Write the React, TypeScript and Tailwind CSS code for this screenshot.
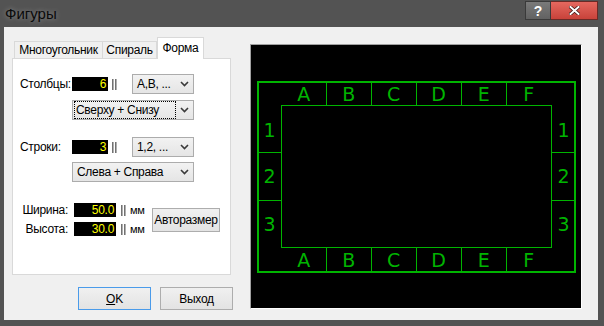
import React from "react";

function Chevron() {
  return (
    <svg width="9" height="6" viewBox="0 0 9 6" className="shrink-0">
      <path d="M1 1 L4.5 4.5 L8 1" fill="none" stroke="#3a3a3a" strokeWidth="1.6" />
    </svg>
  );
}

function Combo({ text, w, focus }: { text: string; w: string; focus?: boolean }) {
  return (
    <div
      className={`${w} h-[20px] border border-[#acacac] bg-linear-to-b from-[#f2f2f2] to-[#e5e5e5] flex items-center justify-between pr-[4px] shrink-0`}
    >
      {focus ? (
        <div className="ml-px h-[18px] w-[102px] border border-dotted border-black flex items-center pl-[1px]">{text}</div>
      ) : (
        <div className="pl-[4px]">{text}</div>
      )}
      <Chevron />
    </div>
  );
}

function Spin() {
  return (
    <div className="flex gap-px h-[11px] w-[5px] shrink-0">
      <div className="w-[2px] h-full bg-linear-to-r from-[#555] to-[#d0d0d0]" />
      <div className="w-[2px] h-full bg-linear-to-r from-[#555] to-[#d0d0d0]" />
    </div>
  );
}

function NumBox({ v, w }: { v: string; w: string }) {
  return (
    <div className={`${w} h-[14px] bg-black text-[#ffff00] flex items-center justify-end pr-[2px] shrink-0 leading-none`}>
      {v}
    </div>
  );
}

export default function App() {
  const green = "#00b400";
  const cols = ["A", "B", "C", "D", "E", "F"];
  const colX = [52.5, 97.5, 142.5, 187.5, 232.5, 277.5];
  const rowY = [84.5, 131, 178.5];
  const thin: [number, number, number, number][] = [
    [30, 60, 301, 61],
    [30, 202, 301, 203],
    [30, 60, 31, 203],
    [300, 60, 301, 203],
  ];
  [75, 120, 165, 210, 255].forEach((x) => {
    thin.push([x, 37, x + 1, 61]);
    thin.push([x, 202, x + 1, 227]);
  });
  [107, 155].forEach((y) => {
    thin.push([7, y, 31, y + 1]);
    thin.push([300, y, 324, y + 1]);
  });
  return (
    <div className="w-[604px] h-[326px] bg-[#535353] flex flex-col font-['Liberation_Sans',Arial,sans-serif] text-[12px] tracking-[-0.3px] text-black overflow-hidden">
      {/* Title bar */}
      <div className="h-[27px] flex items-start pl-[5px] pr-[6px] shrink-0">
        <div className="flex-1 h-[29px] flex items-center text-[15px] text-[#0a0a0a] tracking-normal [text-shadow:0_0_5px_rgba(255,255,255,0.35)]">
          Фигуры
        </div>
        <div className="flex mt-px">
          <div className="w-[26px] h-[19px] bg-linear-to-b from-[#7a7a7a] to-[#626262] border border-[#3a3a3a] flex items-center justify-center text-white font-bold text-[14px] leading-none">
            ?
          </div>
          <div className="w-[47px] h-[19px] bg-linear-to-b from-[#e5685f] to-[#c8423a] border border-[#6a2a26] border-l-0 flex items-center justify-center">
            <svg width="11" height="9" viewBox="0 0 11 9">
              <path d="M1.5 1 L9.5 8 M9.5 1 L1.5 8" stroke="#3a1512" strokeWidth="3.4" strokeLinecap="square" />
              <path d="M1.5 1 L9.5 8 M9.5 1 L1.5 8" stroke="#ffffff" strokeWidth="2" strokeLinecap="square" />
            </svg>
          </div>
        </div>
      </div>

      {/* Content */}
      <div className="flex-1 ml-[4px] mr-[6px] mb-[6px] bg-[#f0f0f0] flex items-start pl-[8px] pt-[10px]">
        {/* Left column */}
        <div className="w-[221px] flex flex-col shrink-0">
          {/* Tabs */}
          <div className="h-[21px] flex items-end pl-[2px]">
            <div className="w-[89px] h-[17px] border border-b-0 border-[#d9d9d9] bg-[#f0f0f0] flex items-center justify-center">
              Многоугольник
            </div>
            <div className="w-[54px] h-[17px] border border-l-0 border-b-0 border-[#d9d9d9] bg-[#f0f0f0] flex items-center justify-center">
              Спираль
            </div>
            <div className="w-[47px] h-[22px] -mb-px relative z-10 border border-b-0 border-[#d9d9d9] bg-white flex items-center justify-center pb-[2px]">
              Форма
            </div>
          </div>
          {/* Panel */}
          <div className="w-[219px] h-[217px] border border-[#d9d9d9] bg-white pl-[7px] flex flex-col">
            <div className="mt-[15px] h-[20px] flex items-center">
              <div className="w-[52px]">Столбцы:</div>
              <NumBox v="6" w="w-[36px]" />
              <div className="ml-[4px]">
                <Spin />
              </div>
              <div className="ml-[15px]">
                <Combo text="A,B, ..." w="w-[62px]" />
              </div>
            </div>
            <div className="mt-[6px] ml-[52px]">
              <Combo text="Сверху + Снизу" w="w-[122px]" focus />
            </div>
            <div className="mt-[17px] h-[20px] flex items-center">
              <div className="w-[52px]">Строки:</div>
              <NumBox v="3" w="w-[36px]" />
              <div className="ml-[4px]">
                <Spin />
              </div>
              <div className="ml-[15px]">
                <Combo text="1,2, ..." w="w-[62px]" />
              </div>
            </div>
            <div className="mt-[5px] ml-[52px]">
              <Combo text="Слева + Справа" w="w-[122px]" />
            </div>
            <div className="mt-[21px] flex items-center">
              <div className="w-[125px] flex flex-col gap-[5px]">
                <div className="h-[14px] flex items-center">
                  <div className="w-[48px] text-right">Ширина:</div>
                  <div className="ml-[6px]">
                    <NumBox v="50.0" w="w-[42px]" />
                  </div>
                  <div className="ml-[5px]">
                    <Spin />
                  </div>
                  <div className="ml-[4px] text-[11px]">мм</div>
                </div>
                <div className="h-[14px] flex items-center">
                  <div className="w-[48px] text-right">Высота:</div>
                  <div className="ml-[6px]">
                    <NumBox v="30.0" w="w-[42px]" />
                  </div>
                  <div className="ml-[5px]">
                    <Spin />
                  </div>
                  <div className="ml-[4px] text-[11px]">мм</div>
                </div>
              </div>
              <div className="ml-[7px] w-[68px] h-[24px] border border-[#adadad] bg-linear-to-b from-[#f0f0f0] to-[#e3e3e3] flex items-center justify-center">
                Авторазмер
              </div>
            </div>
          </div>
          {/* Buttons */}
          <div className="mt-[12px] flex pl-[66px] gap-[9px]">
            <div className="w-[73px] h-[23px] border border-[#4a9bea] bg-linear-to-b from-[#f0f0f0] to-[#e3e3e3] flex items-center justify-center">
              <span>
                <span className="underline">O</span>K
              </span>
            </div>
            <div className="w-[73px] h-[23px] border border-[#adadad] bg-linear-to-b from-[#f0f0f0] to-[#e3e3e3] flex items-center justify-center">
              Выход
            </div>
          </div>
        </div>

        {/* Preview */}
        <div className="ml-[17px] mt-[7px] w-[332px] h-[265px] border border-t-[#a0a0a0] border-l-[#a0a0a0] border-r-white border-b-white bg-black shrink-0">
          <svg width="330" height="263" viewBox="0 0 330 263" className="block">
            <g fill={green} shapeRendering="crispEdges">
              <rect x="6" y="36" width="319" height="2" />
              <rect x="6" y="226" width="319" height="2" />
              <rect x="6" y="36" width="2" height="192" />
              <rect x="323" y="36" width="2" height="192" />
              {thin.map(([x1, y1, x2, y2], i) => (
                <rect key={i} x={x1} y={y1} width={x2 - x1} height={y2 - y1} />
              ))}
            </g>
            <g fill={green} fontFamily="'DejaVu Sans', sans-serif" fontSize="19" textAnchor="middle" dominantBaseline="central">
              {cols.map((c, i) => (
                <g key={c}>
                  <text x={colX[i]} y={49}>{c}</text>
                  <text x={colX[i]} y={215}>{c}</text>
                </g>
              ))}
              {rowY.map((y, i) => (
                <g key={i}>
                  <text x={18.5} y={y}>{i + 1}</text>
                  <text x={312.5} y={y}>{i + 1}</text>
                </g>
              ))}
            </g>
          </svg>
        </div>
      </div>
    </div>
  );
}
